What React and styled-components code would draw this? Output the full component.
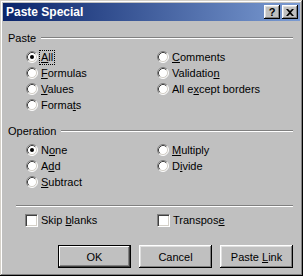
import React from 'react';
import styled, { createGlobalStyle } from 'styled-components';

const GlobalStyle = createGlobalStyle`
  html, body {
    margin: 0;
    padding: 0;
    background: #c0c0c0;
  }
  body {
    font-family: "Liberation Sans", Arial, sans-serif;
    font-size: 11px;
    color: #000;
  }
`;

const Window = styled.div`
  width: 303px;
  height: 276px;
  box-sizing: border-box;
  padding: 3px;
  background: #c0c0c0;
  box-shadow: inset -1px -1px #000, inset 1px 1px #d4d0c8,
    inset -2px -2px #808080, inset 2px 2px #fff;
  display: flex;
  flex-direction: column;
`;

const TitleBar = styled.div`
  height: 18px;
  display: flex;
  align-items: center;
  padding: 0 2px 0 3px;
  background: linear-gradient(to right, #0a246a, #7b9bd2);
  color: #fff;
  font-weight: bold;
  font-size: 12px;
  .title {
    flex: 1;
  }
`;

const CaptionButtons = styled.div`
  display: flex;
  gap: 2px;
`;

const CaptionButton = styled.div`
  width: 16px;
  height: 14px;
  box-sizing: border-box;
  background: #c0c0c0;
  box-shadow: inset -1px -1px #000, inset 1px 1px #fff,
    inset -2px -2px #808080, inset 2px 2px #dfdfdf;
  display: flex;
  align-items: center;
  justify-content: center;
  color: #000;
  font-size: 11px;
  font-weight: bold;
  line-height: 1;
`;

const Body = styled.div`
  padding: 10px 7px 0 5px;
  display: flex;
  flex-direction: column;
`;

const GroupHeader = styled.div`
  height: 14px;
  display: flex;
  align-items: center;
  gap: 5px;
  margin-top: ${(p) => p.$top || 0}px;
  span {
    line-height: 14px;
  }
`;

const Etched = styled.div`
  flex: 1;
  height: 0;
  border-top: 1px solid #808080;
  border-bottom: 1px solid #fff;
`;

const Separator = styled(Etched)`
  flex: none;
  margin: 15px 0 0 8px;
`;

const Columns = styled.div`
  display: flex;
  margin-top: ${(p) => p.$top || 0}px;
  padding-left: ${(p) => p.$left || 18}px;
`;

const Column = styled.div`
  display: flex;
  flex-direction: column;
  width: ${(p) => (p.$width ? `${p.$width}px` : 'auto')};
`;

const Option = styled.div`
  height: 16px;
  display: flex;
  align-items: center;
  gap: 3px;
  white-space: nowrap;
`;

const Label = styled.span`
  line-height: 13px;
  ${(p) =>
    p.$focus &&
    `
    outline: 1px dotted #000;
    outline-offset: 0;
    padding: 0 1px;
    margin-left: -1px;
  `}
`;

const Check = styled.div`
  width: 13px;
  height: 13px;
  box-sizing: border-box;
  background: #fff;
  border: 1px solid;
  border-color: #808080 #fff #fff #808080;
  box-shadow: inset 1px 1px #404040, inset -1px -1px #d4d0c8;
`;

const ButtonRow = styled.div`
  display: flex;
  justify-content: flex-end;
  gap: 8px;
  margin-top: 17px;
`;

const Button = styled.div`
  width: 73px;
  height: 23px;
  box-sizing: border-box;
  background: #c0c0c0;
  display: flex;
  align-items: center;
  justify-content: center;
  box-shadow: ${(p) =>
    p.$default
      ? 'inset 0 0 0 1px #000, inset -2px -2px #404040, inset 2px 2px #fff, inset -3px -3px #808080'
      : 'inset -1px -1px #000, inset 1px 1px #fff, inset -2px -2px #808080, inset 2px 2px #dfdfdf'};
`;

function Radio({ checked }) {
  return (
    <svg width="12" height="12" viewBox="0 0 12 12">
      <circle cx="6" cy="6" r="5" fill="#fff" />
      <path d="M2.11 9.89 A5.5 5.5 0 0 1 9.89 2.11" stroke="#808080" fill="none" />
      <path d="M9.89 2.11 A5.5 5.5 0 0 1 2.11 9.89" stroke="#fff" fill="none" />
      <path d="M2.82 9.18 A4.5 4.5 0 0 1 9.18 2.82" stroke="#404040" fill="none" />
      <path d="M9.18 2.82 A4.5 4.5 0 0 1 2.82 9.18" stroke="#d4d0c8" fill="none" />
      {checked && <circle cx="6" cy="6" r="2" fill="#000" />}
    </svg>
  );
}

function RadioOption({ checked, focus, children }) {
  return (
    <Option>
      <Radio checked={checked} />
      <Label $focus={focus}>{children}</Label>
    </Option>
  );
}

function CheckOption({ children }) {
  return (
    <Option>
      <Check />
      <Label>{children}</Label>
    </Option>
  );
}

export default function App() {
  return (
    <>
      <GlobalStyle />
      <Window>
        <TitleBar>
          <span className="title">Paste Special</span>
          <CaptionButtons>
            <CaptionButton>?</CaptionButton>
            <CaptionButton>
              <svg width="8" height="7" viewBox="0 0 8 7">
                <path d="M0 0h2l2 2 2-2h2L5 3.5 8 7H6L4 5 2 7H0l3-3.5z" fill="#000" />
              </svg>
            </CaptionButton>
          </CaptionButtons>
        </TitleBar>
        <Body>
          <GroupHeader>
            <span>Paste</span>
            <Etched />
          </GroupHeader>
          <Columns $top={4}>
            <Column $width={131}>
              <RadioOption checked focus><u>A</u>ll</RadioOption>
              <RadioOption><u>F</u>ormulas</RadioOption>
              <RadioOption><u>V</u>alues</RadioOption>
              <RadioOption>Forma<u>t</u>s</RadioOption>
            </Column>
            <Column>
              <RadioOption><u>C</u>omments</RadioOption>
              <RadioOption>Validatio<u>n</u></RadioOption>
              <RadioOption>All e<u>x</u>cept borders</RadioOption>
            </Column>
          </Columns>
          <GroupHeader $top={11}>
            <span>Operation</span>
            <Etched />
          </GroupHeader>
          <Columns $top={4}>
            <Column $width={131}>
              <RadioOption checked>N<u>o</u>ne</RadioOption>
              <RadioOption>A<u>d</u>d</RadioOption>
              <RadioOption><u>S</u>ubtract</RadioOption>
            </Column>
            <Column>
              <RadioOption><u>M</u>ultiply</RadioOption>
              <RadioOption>D<u>i</u>vide</RadioOption>
            </Column>
          </Columns>
          <Separator />
          <Columns $top={5} $left={17}>
            <Column $width={132}>
              <CheckOption>Skip <u>b</u>lanks</CheckOption>
            </Column>
            <Column>
              <CheckOption>Transpos<u>e</u></CheckOption>
            </Column>
          </Columns>
          <ButtonRow>
            <Button $default><span>OK</span></Button>
            <Button><span>Cancel</span></Button>
            <Button><span>Paste <u>L</u>ink</span></Button>
          </ButtonRow>
        </Body>
      </Window>
    </>
  );
}
